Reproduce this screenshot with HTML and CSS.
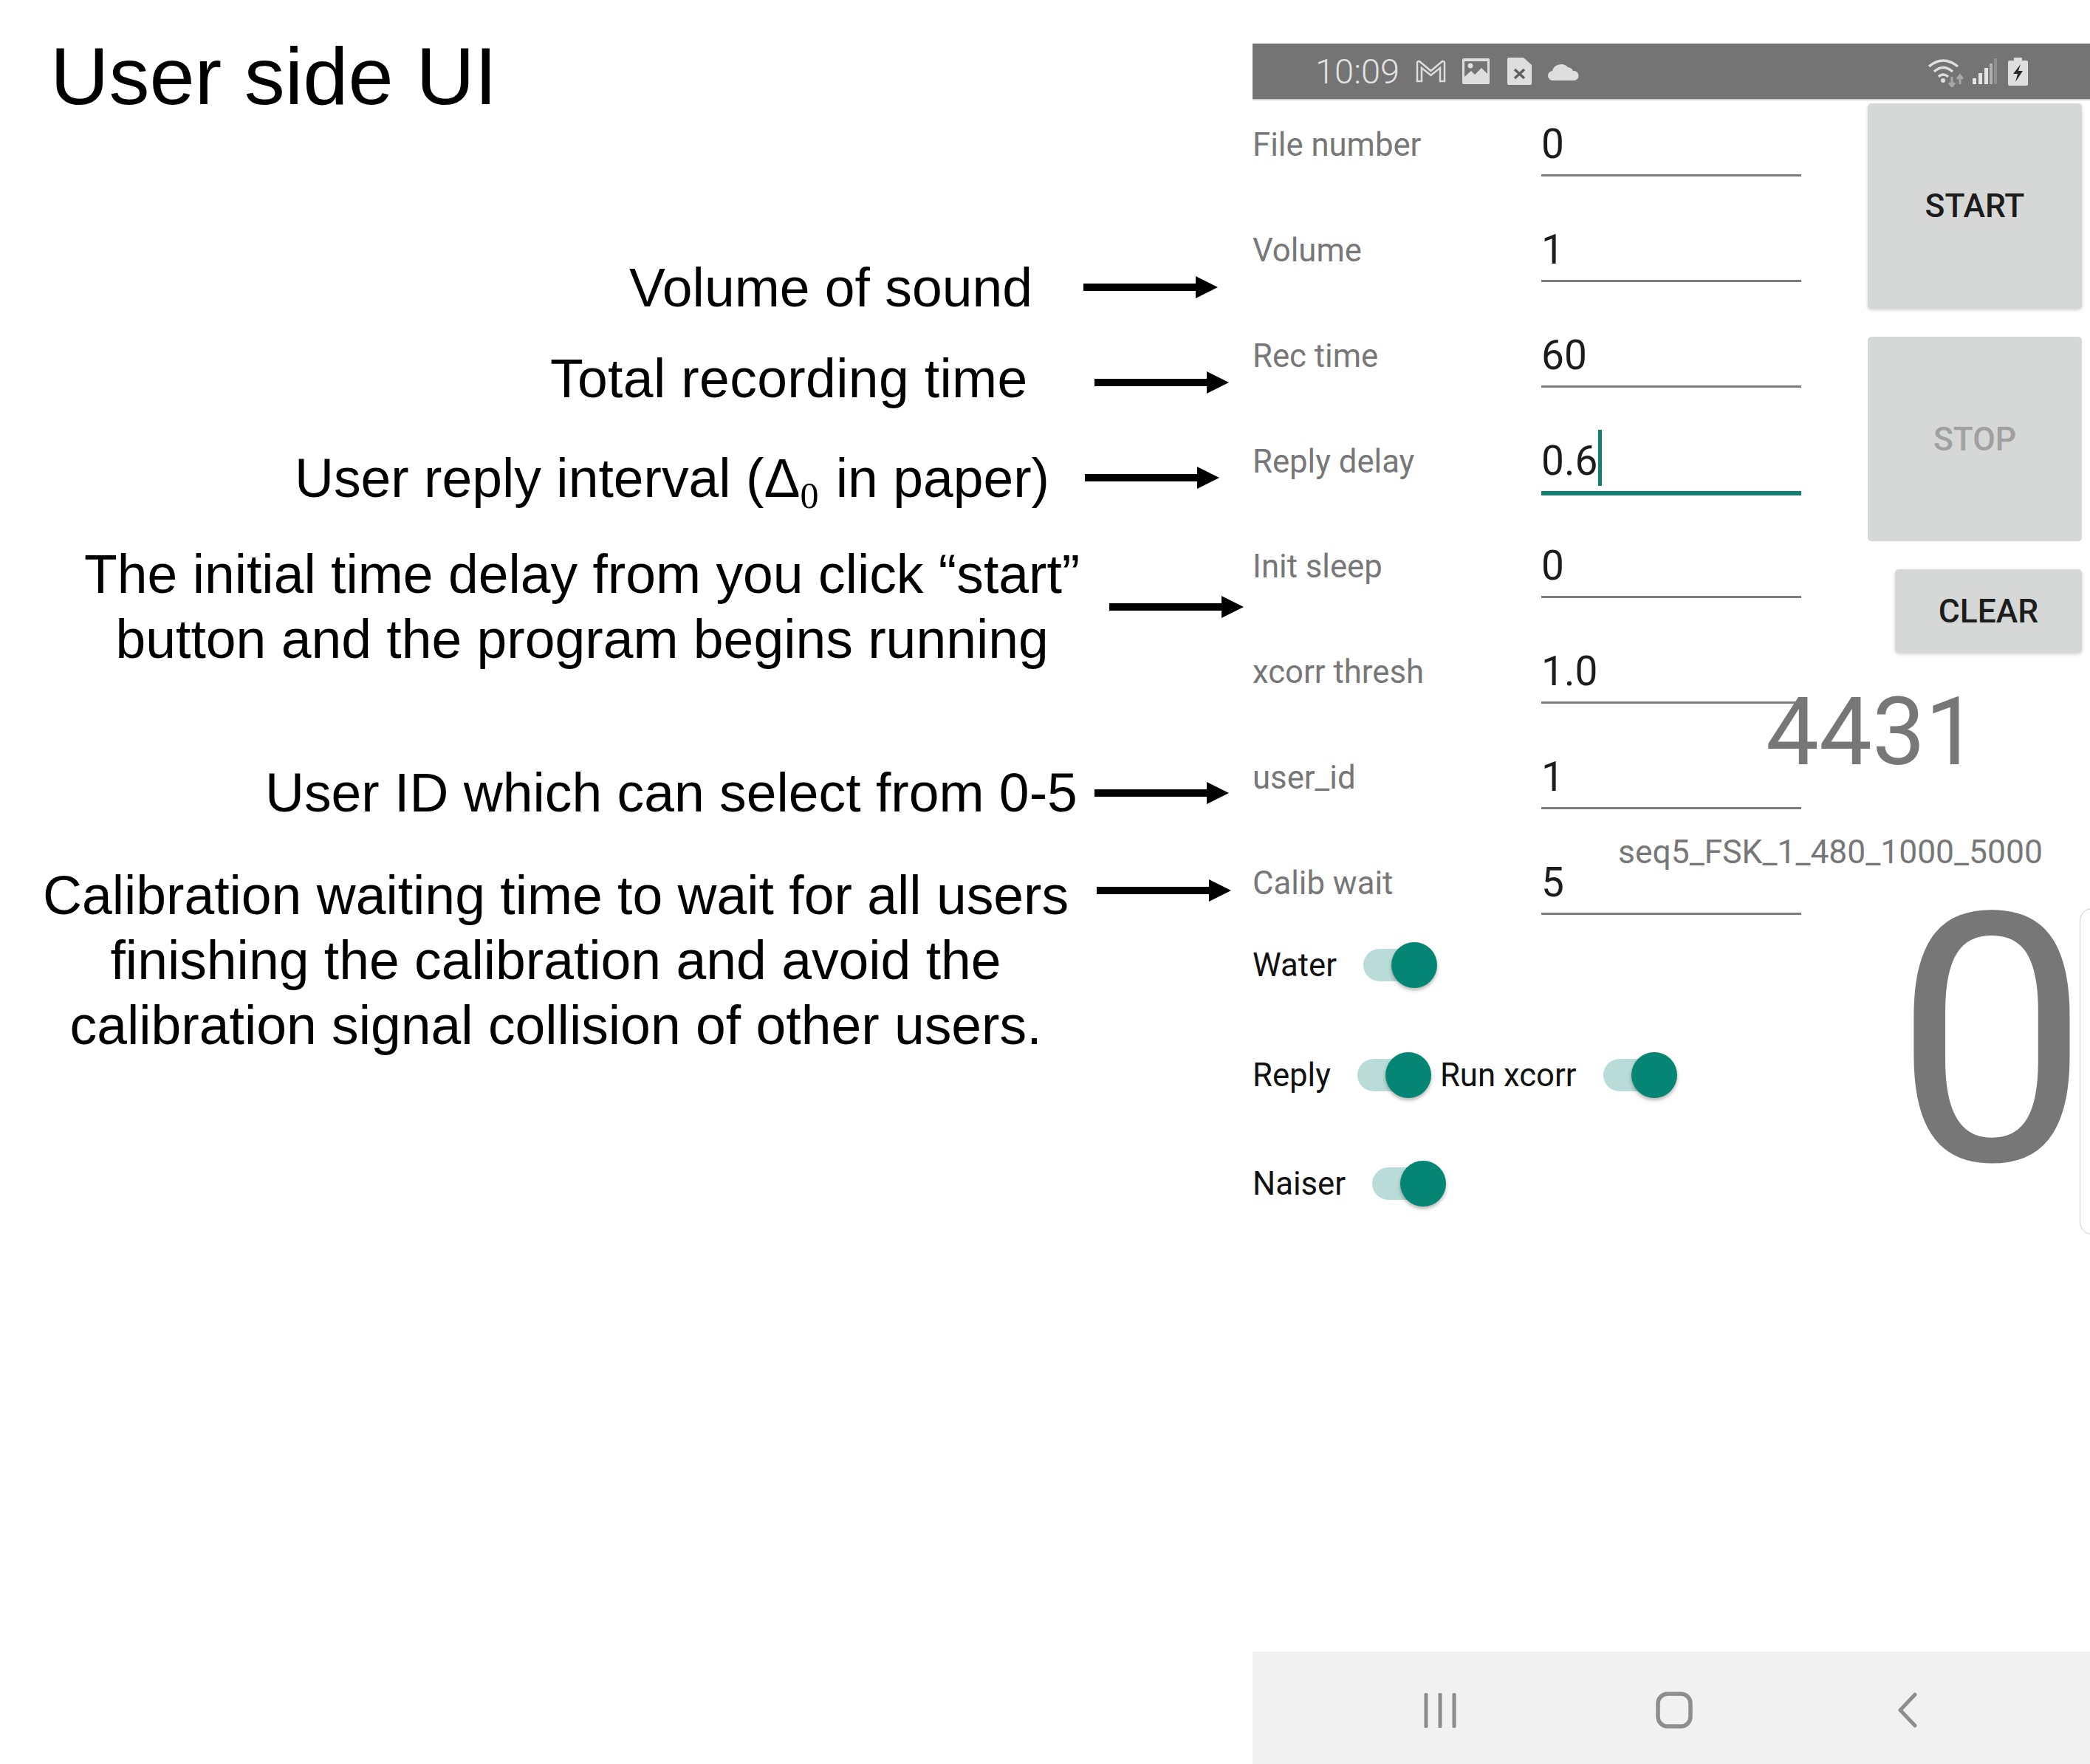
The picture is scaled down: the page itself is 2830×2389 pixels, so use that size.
FILE: index.html

```html
<!DOCTYPE html>
<html>
<head>
<meta charset="utf-8">
<title>User side UI</title>
<link rel="stylesheet" href="styles.css">
</head>
<body>
<div class="page">
  <div class="notes">
    <h1 class="title">User side UI</h1>

    <div class="note note-volume">
      <p>Volume of sound</p>
      <svg class="arrow" width="182" height="30" viewBox="0 0 182 30"><path d="M0 10H152V0L182 15L152 30V20H0Z"/></svg>
    </div>
    <div class="note note-rec">
      <p>Total recording time</p>
      <svg class="arrow" width="182" height="30" viewBox="0 0 182 30"><path d="M0 10H152V0L182 15L152 30V20H0Z"/></svg>
    </div>
    <div class="note note-reply">
      <p>User reply interval (&Delta;<sub>0</sub> in paper)</p>
      <svg class="arrow" width="182" height="30" viewBox="0 0 182 30"><path d="M0 10H152V0L182 15L152 30V20H0Z"/></svg>
    </div>
    <div class="note note-sleep">
      <p>The initial time delay from you click “start”<br>button and the program begins running</p>
      <svg class="arrow" width="182" height="30" viewBox="0 0 182 30"><path d="M0 10H152V0L182 15L152 30V20H0Z"/></svg>
    </div>
    <div class="note note-user">
      <p>User ID which can select from 0-5</p>
      <svg class="arrow" width="182" height="30" viewBox="0 0 182 30"><path d="M0 10H152V0L182 15L152 30V20H0Z"/></svg>
    </div>
    <div class="note note-calib">
      <p>Calibration waiting time to wait for all users<br>finishing the calibration and avoid the<br>calibration signal collision of other users.</p>
      <svg class="arrow" width="182" height="30" viewBox="0 0 182 30"><path d="M0 10H152V0L182 15L152 30V20H0Z"/></svg>
    </div>
  </div>

  <div class="phone">
    <div class="statusbar">
      <span class="time">10:09</span>
      <svg class="ic-mail" width="41" height="31" viewBox="0 0 41 31"><path d="M2 29V4Q2 1.500 5 2L20.500 15L36 2Q39 1.500 39 4V29H33V11L20.500 21L8 11V29Z" fill="none" stroke="#dcdcdc" stroke-width="2.500"/></svg>
      <svg class="ic-image" width="37" height="35" viewBox="0 0 37 35"><rect width="37" height="35" rx="2" fill="#dedede"/><path d="M3 4H34V21L26 13L17 22L12 17L3 25Z" fill="#747474"/><circle cx="11" cy="10" r="3.500" fill="#dedede"/></svg>
      <svg class="ic-file" width="33" height="37" viewBox="0 0 33 37"><path d="M2 0H22L33 10V35a2 2 0 0 1-2 2H2a2 2 0 0 1-2-2V2a2 2 0 0 1 2-2Z" fill="#dedede"/><path d="M10 16L23 28M23 16L10 28" stroke="#606060" stroke-width="3.500"/></svg>
      <svg class="ic-cloud" width="42" height="24" viewBox="0 0 42 24"><path d="M7 24a6.500 6.500 0 0 1-1-13A12 11 0 0 1 27 6a8 8 0 0 1 7 5a6.500 6.500 0 0 1 2 13Z" fill="#dedede"/></svg>
      <span class="status-right">
        <svg class="ic-wifi" width="48" height="38" viewBox="0 0 48 38"><g fill="none" stroke="#dedede" stroke-width="3.500"><path d="M1 10Q20-6 40 10"/><path d="M8 17Q20 6 33 17"/><path d="M14 24Q20 18 27 24"/></g><circle cx="20" cy="29" r="3" fill="#dedede"/><path d="M32 24V36M28 32L32 37L36 32M43 34V23M39 27L43 22L47 27" fill="none" stroke="#a8a8a8" stroke-width="3"/></svg>
        <svg class="ic-signal" width="33" height="35" viewBox="0 0 33 35"><rect y="27" width="5" height="8" fill="#e4e4e4"/><rect x="8" y="20" width="5" height="15" fill="#e4e4e4"/><rect x="16" y="13" width="5" height="22" fill="#e4e4e4"/><rect x="23" y="7" width="4" height="28" fill="#b0b0b0"/><rect x="29" y="0" width="4" height="35" fill="#8f8f8f"/></svg>
        <svg class="ic-battery" width="27" height="38" viewBox="0 0 27 38"><path d="M8 0H19V4H25a2 2 0 0 1 2 2V36a2 2 0 0 1-2 2H2a2 2 0 0 1-2-2V6a2 2 0 0 1 2-2H8Z" fill="#dedede"/><path d="M17 9L7 22H13L10 33L20 18H14Z" fill="#2a2a2a"/></svg>
      </span>
    </div>

    <div class="screen">
      <div class="form">
        <div class="field"><label>File number</label><span class="value">0</span></div>
        <div class="field"><label>Volume</label><span class="value">1</span></div>
        <div class="field"><label>Rec time</label><span class="value">60</span></div>
        <div class="field focused"><label>Reply delay</label><span class="value">0.6<i class="caret"></i></span></div>
        <div class="field"><label>Init sleep</label><span class="value">0</span></div>
        <div class="field"><label>xcorr thresh</label><span class="value">1.0</span></div>
        <div class="field"><label>user_id</label><span class="value">1</span></div>
        <div class="field"><label>Calib wait</label><span class="value">5</span></div>

        <div class="toggle-row water">
          <span class="toggle-label">Water</span>
          <span class="switch"><i class="track"></i><i class="thumb"></i></span>
        </div>
        <div class="toggle-row reply">
          <span class="toggle-label">Reply</span>
          <span class="switch"><i class="track"></i><i class="thumb"></i></span>
          <span class="toggle-label second">Run xcorr</span>
          <span class="switch"><i class="track"></i><i class="thumb"></i></span>
        </div>
        <div class="toggle-row naiser">
          <span class="toggle-label">Naiser</span>
          <span class="switch"><i class="track"></i><i class="thumb"></i></span>
        </div>
      </div>

      <div class="side">
        <button class="btn btn-start">START</button>
        <button class="btn btn-stop">STOP</button>
        <button class="btn btn-clear">CLEAR</button>
        <div class="count">4431</div>
        <div class="seq">seq5_FSK_1_480_1000_5000</div>
        <div class="big">0</div>
      </div>
      <div class="edge-handle"></div>
    </div>

    <div class="navbar">
      <svg width="44" height="47" viewBox="0 0 44 47"><path d="M3 2V45M22 2V45M41 2V45" stroke="#8d8d8d" stroke-width="5" stroke-linecap="round"/></svg>
      <svg width="50" height="50" viewBox="0 0 50 50"><rect x="3" y="3" width="44" height="44" rx="13" fill="none" stroke="#8d8d8d" stroke-width="5.500"/></svg>
      <svg class="nav-back" width="26" height="48" viewBox="0 0 26 48"><path d="M23 3L3 24L23 45" fill="none" stroke="#8d8d8d" stroke-width="5" stroke-linecap="round" stroke-linejoin="round"/></svg>
    </div>
  </div>
</div>
</body>
</html>
```

FILE: styles.css

```css
body {
  margin: 0;
  background: #fff;
  font-family: "Liberation Sans", Arial, sans-serif;
  overflow: hidden;
}
.page {
  display: flex;
  height: 2389px;
}

/* left side, the annotations */
.notes {
  width: 1696px;
  flex: none;
  color: #000;
}
.title {
  margin: 38px 0 0 68px;
  font-size: 110px;
  line-height: 130px;
  font-weight: normal;
}
.note {
  display: flex;
  align-items: flex-start;
  font-size: 73.3px;
  line-height: 88px;
}
.note p {
  margin: 0;
  white-space: nowrap;
  text-align: center;
}
.note sub {
  margin-right: 3px;
  font-family: "Liberation Serif", serif;
  font-size: 50px;
  line-height: 0;
  vertical-align: -15px;
}
.note-volume { margin-top: 178px; padding-left: 852px; }
.note-volume .arrow { margin: 28px 0 0 69px; }
.note-rec { margin-top: 35px; padding-left: 745px; letter-spacing: 0.35px; }
.note-rec .arrow { margin: 34px 0 0 90px; }
.note-reply { margin-top: 47px; padding-left: 399px; }
.note-reply .arrow { margin: 28px 0 0 48px; }
.note-sleep { margin-top: 42px; padding-left: 114px; }
.note-sleep .arrow { margin: 73px 0 0 40px; }
.note-user { margin-top: 120px; padding-left: 359px; }
.note-user .arrow { margin: 29px 0 0 23px; }
.note-calib { margin-top: 51px; padding-left: 58px; }
.note-calib .arrow { margin: 22px 0 0 38px; }

/* right side, the phone */
.phone {
  flex: 1;
  min-width: 0;
  display: flex;
  flex-direction: column;
  margin-top: 59px;
  font-family: Roboto, sans-serif;
}
.statusbar {
  height: 75px;
  flex: none;
  display: flex;
  align-items: center;
  padding-left: 85px;
  background: #747474;
  border-bottom: 2px solid #cfcfcf;
  color: #e2e2e2;
}
.time {
  font-size: 47px;
  font-weight: 300;
  width: 136px;
  white-space: nowrap;
}
.ic-image { margin-left: 22px; }
.ic-file { margin-left: 24px; }
.ic-cloud { margin-left: 22px; }
.status-right {
  display: flex;
  align-items: center;
  margin-left: 473px;
}
.ic-wifi { margin-top: 4px; }
.ic-signal { margin-left: 12px; }
.ic-battery { margin-left: 15px; }

.screen {
  flex: 1;
  display: flex;
  position: relative;
}
.form {
  width: 743px;
  flex: none;
  padding-top: 29px;
}
.field {
  height: 74px;
  margin-bottom: 68.85px;
  display: grid;
  grid-template-columns: 391px 352px;
}
.field label {
  font-size: 43.7px;
  line-height: 62px;
  color: #777;
}
.value {
  height: 71px;
  font-size: 55px;
  line-height: 60px;
  color: #1c1c1c;
  border-bottom: 3px solid #7c7c7c;
  position: relative;
}
.focused .value {
  border-bottom: 6px solid #118272;
}
.caret {
  position: absolute;
  left: 77px;
  top: -12px;
  width: 5px;
  height: 76px;
  background: #118272;
}

.toggle-row {
  display: flex;
  align-items: center;
  height: 64px;
  font-size: 43.7px;
  color: #111;
}
.water { margin-top: -33px; }
.reply { margin-top: 85px; }
.naiser { margin-top: 83px; }
.toggle-label { margin-right: 36px; }
.toggle-label.second { margin-left: 12px; }
.switch {
  display: flex;
  align-items: center;
  width: 100px;
  height: 63px;
}
.track {
  width: 80px;
  height: 44px;
  flex: none;
  border-radius: 22px;
  background: #b9dcd8;
}
.thumb {
  width: 62px;
  height: 62px;
  flex: none;
  margin-left: -42px;
  border-radius: 50%;
  background: #058573;
  box-shadow: 0 3px 5px rgba(0, 0, 0, 0.3);
}

.side {
  flex: 1;
  display: flex;
  flex-direction: column;
  color: #777;
}
.btn {
  display: block;
  border: none;
  padding: 0;
  background: #d6d7d7;
  border-radius: 5px;
  font-family: Roboto, sans-serif;
  font-size: 44.4px;
  font-weight: 500;
  color: #1c1c1c;
  box-shadow: 0 2px 4px rgba(0, 0, 0, 0.18);
}
.btn-start {
  width: 290px;
  height: 278px;
  margin: 4px 0 0 90px;
}
.btn-stop {
  width: 290px;
  height: 277px;
  margin: 38px 0 0 90px;
  color: #a0a0a0;
  box-shadow: none;
}
.btn-clear {
  width: 253px;
  height: 113px;
  margin: 38px 0 0 127px;
}
.count {
  margin: 42px 0 0 -48px;
  font-size: 128px;
  line-height: 130px;
}
.seq {
  margin: 71px 0 0 -248px;
  font-size: 44.4px;
  line-height: 54px;
  white-space: nowrap;
}
.big {
  margin: 10px 0 0 126px;
  font-size: 470px;
  line-height: 440px;
}
.edge-handle {
  position: absolute;
  right: -20px;
  top: 1094px;
  width: 32px;
  height: 440px;
  border: 1px solid #cccccc;
  border-radius: 18px;
}

.navbar {
  height: 146px;
  flex: none;
  display: flex;
  align-items: center;
  padding-top: 6px;
  padding-left: 232px;
  gap: 270px;
  background: #f1f1f1;
}
.nav-back { margin-left: 8px; }
```
